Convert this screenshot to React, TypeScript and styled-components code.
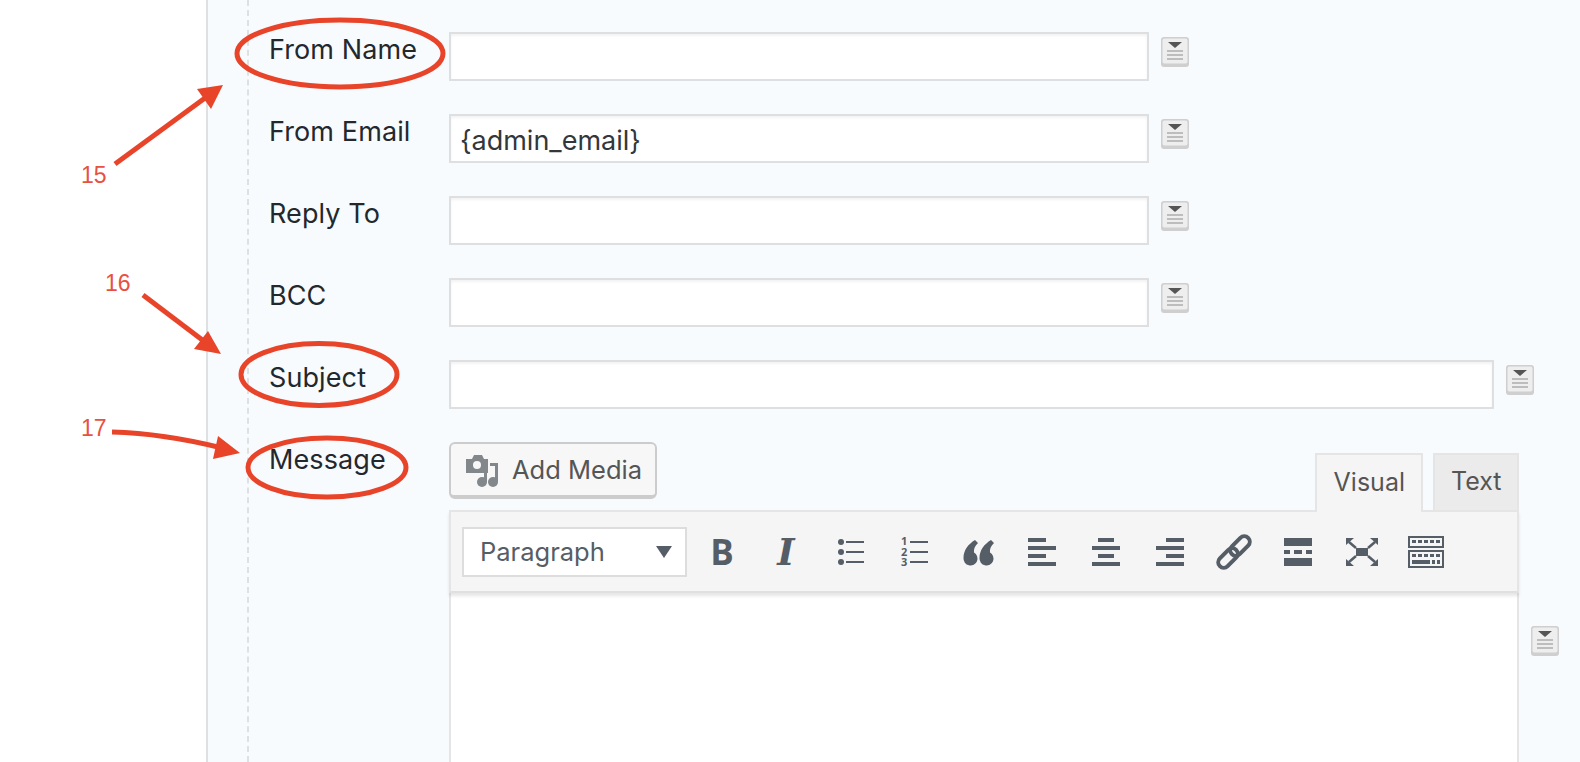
import React from "react";
import styled, { createGlobalStyle } from "styled-components";

const Global = createGlobalStyle`
  html, body { margin: 0; padding: 0; background: #fff; }
  body { font-family: Inter, "Liberation Sans", sans-serif; overflow: hidden; }
  * { box-sizing: border-box; }
`;

const Page = styled.div`
  position: relative;
  width: 1580px;
  height: 762px;
  overflow: hidden;
  background: #fff;
`;

const Panel = styled.div`
  margin-left: 206px;
  height: 762px;
  background: #f8fbfe;
  border-left: 2px solid #dfe0e2;
  padding-left: 39px;
`;

const Indent = styled.div`
  height: 100%;
  border-left: 2px dashed #dfe0e2;
  padding: 32px 0 0 20px;
  display: flex;
  flex-direction: column;
  gap: 33px;
`;

const Row = styled.div`
  display: flex;
  align-items: flex-start;
`;

const Label = styled.label`
  flex: 0 0 180px;
  font-size: 27px;
  line-height: 36px;
  letter-spacing: 0.1px;
  color: #23282d;
`;

const TextInput = styled.div<{ $width: number }>`
  width: ${(p) => p.$width}px;
  height: 49px;
  padding: 3px 9px 0;
  display: flex;
  align-items: center;
  background: #fff;
  border: 2px solid #dddfe1;
  box-shadow: inset 0 2px 3px rgba(0, 0, 0, 0.05);
  font-size: 27px;
  color: #32373c;
`;

const TemplateBtn = styled.svg<{ $top?: number }>`
  flex: none;
  width: 28px;
  height: 30px;
  margin-left: 12px;
  margin-top: ${(p) => p.$top ?? 5}px;
`;

const Editor = styled.div`
  width: 1070px;
  display: flex;
  flex-direction: column;
`;

const EditorHead = styled.div`
  display: flex;
  justify-content: space-between;
  align-items: flex-start;
`;

const MediaButton = styled.div`
  width: 208px;
  height: 57px;
  display: flex;
  align-items: center;
  gap: 12px;
  padding-left: 15px;
  background: #f7f7f7;
  border: 2px solid #cccccc;
  border-bottom-width: 4px;
  border-radius: 6px;
  font-size: 25.5px;
  color: #555555;
`;

const Tabs = styled.div`
  display: flex;
  align-items: flex-end;
  gap: 10px;
  margin-top: 11px;
  margin-bottom: -2px;
  position: relative;
  z-index: 2;
`;

const Tab = styled.div<{ $active?: boolean }>`
  height: 59px;
  padding: 0 ${(p) => (p.$active ? 16.5 : 15.5)}px 3px;
  display: flex;
  align-items: center;
  border: 2px solid #e5e5e5;
  border-bottom: ${(p) => (p.$active ? "none" : "2px solid #e5e5e5")};
  background: ${(p) => (p.$active ? "#f5f5f5" : "#ebebeb")};
  font-size: 25px;
  color: #555555;
`;

const Toolbar = styled.div`
  position: relative;
  z-index: 1;
  height: 83px;
  display: flex;
  align-items: center;
  padding-left: 11px;
  background: #f5f5f5;
  border: 2px solid #e5e5e5;
  border-bottom: 2px solid #e0e0e0;
  box-shadow: 0 3px 3px rgba(0, 0, 0, 0.1);
`;

const FormatSelect = styled.div`
  width: 225px;
  height: 50px;
  margin-right: 3px;
  padding: 0 13px 0 16px;
  display: flex;
  align-items: center;
  justify-content: space-between;
  background: #fff;
  border: 2px solid #dddddd;
  font-size: 25.5px;
  color: #555d66;
`;

const Caret = styled.span`
  width: 0;
  height: 0;
  border-left: 8px solid transparent;
  border-right: 8px solid transparent;
  border-top: 12px solid #555d66;
`;

const ToolButton = styled.div`
  flex: none;
  width: 64px;
  height: 40px;
  display: flex;
  align-items: center;
  justify-content: center;
  color: #555d66;
  svg {
    width: 40px;
    height: 40px;
  }
`;

const BoldGlyph = styled.span`
  font-family: "Open Sans", sans-serif;
  font-weight: 700;
  font-size: 35px;
  line-height: 40px;
`;

const ItalicGlyph = styled.span`
  font-family: "DejaVu Serif", serif;
  font-weight: 700;
  font-style: italic;
  font-size: 37px;
  line-height: 40px;
`;

const EditorBody = styled.div`
  height: 240px;
  background: #fff;
  border: 2px solid #e5e5e5;
  border-top: none;
`;

const Annotations = styled.svg`
  position: absolute;
  left: 0;
  top: 0;
  width: 1580px;
  height: 762px;
  pointer-events: none;
`;

const Callout = styled.span<{ $x: number; $y: number }>`
  position: absolute;
  left: ${(p) => p.$x}px;
  top: ${(p) => p.$y}px;
  font-family: "Liberation Sans", sans-serif;
  font-size: 23px;
  line-height: 26px;
  color: #e8513f;
`;

const Template = ({ top }: { top?: number }) => (
  <TemplateBtn $top={top} viewBox="0 0 28 30">
    <rect x="0" y="0" width="28" height="30" rx="3" fill="#cfcfcf" />
    <rect x="1.5" y="1.5" width="25" height="25" rx="2" fill="#eeeeee" />
    <path d="M7 5h14l-7 6z" fill="#555" />
    <path d="M6 14h16M6 18h16M6 22h16" stroke="#bdbdbd" strokeWidth="2" />
  </TemplateBtn>
);

const Bars = ({ short }: { short: [number, number] }) => (
  <svg viewBox="0 0 40 40" fill="currentColor">
    <rect x={short[0]} y="6" width={short[1]} height="4" />
    <rect x="6" y="14" width="28" height="4" />
    <rect x={short[0]} y="22" width={short[1]} height="4" />
    <rect x="6" y="30" width="28" height="4" />
  </svg>
);

const fields: { label: string; value?: string; width: number }[] = [
  { label: "From Name", width: 700 },
  { label: "From Email", value: "{admin_email}", width: 700 },
  { label: "Reply To", width: 700 },
  { label: "BCC", width: 700 },
  { label: "Subject", width: 1045 },
];

export default function App() {
  return (
    <Page>
      <Global />
      <Panel>
        <Indent>
          {fields.map((f) => (
            <Row key={f.label}>
              <Label>{f.label}</Label>
              <TextInput $width={f.width}>{f.value}</TextInput>
              <Template />
            </Row>
          ))}
          <Row>
            <Label>Message</Label>
            <Editor>
              <EditorHead>
                <MediaButton>
                  <svg width="34" height="34" viewBox="0 0 34 34" fill="#82878c">
                    <g transform="translate(0 2)">
                      <path d="M0 4h6l2-4h8l2 4h4v14H0z" />
                      <circle cx="11" cy="10" r="4" fill="#f7f7f7" />
                      <path d="M24 8h8v19h-3V11h-5z" />
                      <circle cx="27" cy="27" r="5" />
                      <path d="M18 18h3v9h-3z" />
                      <circle cx="16" cy="27" r="5" />
                    </g>
                  </svg>
                  Add Media
                </MediaButton>
                <Tabs>
                  <Tab $active>Visual</Tab>
                  <Tab>Text</Tab>
                </Tabs>
              </EditorHead>
              <Toolbar>
                <FormatSelect>
                  Paragraph
                  <Caret />
                </FormatSelect>
                <ToolButton>
                  <BoldGlyph>B</BoldGlyph>
                </ToolButton>
                <ToolButton>
                  <ItalicGlyph>I</ItalicGlyph>
                </ToolButton>
                <ToolButton>
                  <svg viewBox="0 0 40 40" fill="currentColor">
                    <circle cx="11" cy="10" r="3" />
                    <circle cx="11" cy="20" r="3" />
                    <circle cx="11" cy="30" r="3" />
                    <path d="M16 9h18v2H16zM16 19h18v2H16zM16 29h18v2H16z" />
                  </svg>
                </ToolButton>
                <ToolButton>
                  <svg viewBox="0 0 40 40" fill="currentColor">
                    <text x="7" y="13" fontSize="11" fontWeight="700" fontFamily="Open Sans, sans-serif">1</text>
                    <text x="7" y="23.5" fontSize="11" fontWeight="700" fontFamily="Open Sans, sans-serif">2</text>
                    <text x="7" y="34" fontSize="11" fontWeight="700" fontFamily="Open Sans, sans-serif">3</text>
                    <path d="M16 9h18v2H16zM16 19h18v2H16zM16 29h18v2H16z" />
                  </svg>
                </ToolButton>
                <ToolButton>
                  <svg viewBox="0 0 40 40" fill="currentColor">
                    <path d="M17 8l3 3C17 14 15.5 17 16 20.5A7 7 0 1 1 5.5 26C5.5 18 10.5 12 17 8Z" />
                    <path d="M33 8l3 3C33 14 31.5 17 32 20.5A7 7 0 1 1 21.5 26C21.5 18 26.5 12 33 8Z" />
                  </svg>
                </ToolButton>
                <ToolButton>
                  <Bars short={[6, 18]} />
                </ToolButton>
                <ToolButton>
                  <Bars short={[12, 16]} />
                </ToolButton>
                <ToolButton>
                  <Bars short={[16, 18]} />
                </ToolButton>
                <ToolButton>
                  <svg viewBox="0 0 40 40" fill="none" stroke="currentColor" strokeWidth="4">
                    <g transform="rotate(-45 20 20)">
                      <rect x="0" y="14.5" width="23" height="11" rx="5.5" />
                      <rect x="17" y="14.5" width="23" height="11" rx="5.5" />
                    </g>
                  </svg>
                </ToolButton>
                <ToolButton>
                  <svg viewBox="0 0 40 40" fill="currentColor">
                    <path d="M6 6h28v8H6zM6 18h6v4H6zM16 18h8v4h-8zM28 18h6v4h-6zM6 26h28v8H6z" />
                  </svg>
                </ToolButton>
                <ToolButton>
                  <svg viewBox="0 0 40 40" fill="currentColor">
                    <rect x="14" y="16" width="12" height="8" />
                    <path d="M14 16L7 10M26 16l7-6M14 24l-7 6M26 24l7 6" stroke="currentColor" strokeWidth="2.5" />
                    <path d="M4 6h8l-8 7zM36 6h-8l8 7zM4 34h8l-8-7zM36 34h-8l8-7z" />
                  </svg>
                </ToolButton>
                <ToolButton>
                  <svg viewBox="0 0 40 40" fill="currentColor">
                    <rect x="3" y="5" width="34" height="10" fill="none" stroke="currentColor" strokeWidth="2" />
                    <rect x="3" y="19" width="34" height="16" fill="none" stroke="currentColor" strokeWidth="2" />
                    <path d="M6 8h4v3H6zM12 8h4v3h-4zM18 8h4v3h-4zM24 8h4v3h-4zM30 8h4v3h-4z" />
                    <path d="M6 22h4v3H6zM12 22h4v3h-4zM18 22h4v3h-4zM24 22h4v3h-4zM30 22h4v3h-4z" />
                    <path d="M6 28h18v4H6zM26 28h3v4h-3zM31 28h3v4h-3z" />
                  </svg>
                </ToolButton>
              </Toolbar>
              <EditorBody />
            </Editor>
            <Template top={184} />
          </Row>
        </Indent>
      </Panel>

      <Annotations viewBox="0 0 1580 762" fill="none" stroke="#e8442a" strokeWidth="5">
        <ellipse cx="340" cy="53.5" rx="103" ry="33.5" />
        <ellipse cx="319" cy="374.5" rx="78" ry="31" />
        <ellipse cx="327" cy="467.5" rx="79" ry="29.5" />
        <path d="M115 164L205 98" />
        <path d="M223 85L197 89L211 109Z" fill="#e8442a" stroke="none" />
        <path d="M143 295L205 342" />
        <path d="M221 354L194 349L208 331Z" fill="#e8442a" stroke="none" />
        <path d="M112 432C150 433 190 440 222 448" />
        <path d="M240 453L218 436L213 459Z" fill="#e8442a" stroke="none" />
      </Annotations>
      <Callout $x={81} $y={162}>15</Callout>
      <Callout $x={105} $y={270}>16</Callout>
      <Callout $x={81} $y={415}>17</Callout>
    </Page>
  );
}
